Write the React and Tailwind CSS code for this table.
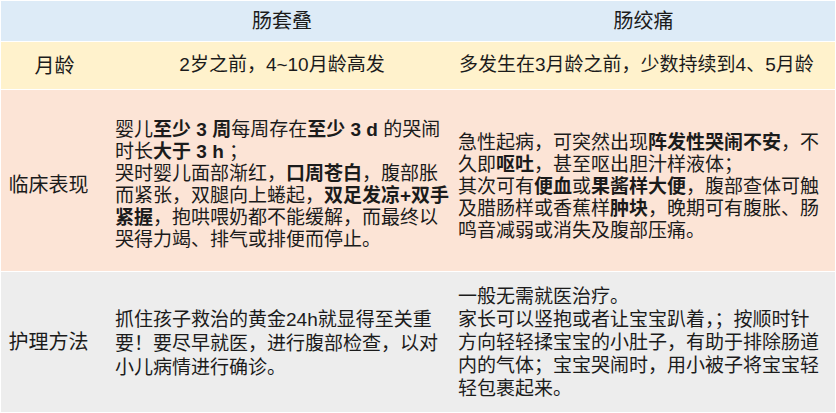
import React from 'react';

const B = ({ children }) => <span className="font-bold">{children}</span>;

const Line = ({ children }) => <div className="whitespace-nowrap">{children}</div>;

export default function App() {
  return (
    <div className="w-[836px] h-[413px] bg-white p-px flex flex-col gap-px text-[#1b1b1b] font-['Liberation_Sans','Noto_Sans_CJK_SC',sans-serif] overflow-hidden">
      {/* header */}
      <div className="flex h-[40px] bg-[#ddebf7] text-[20px]">
        <div className="w-[99px]" />
        <div className="w-[352px] pl-3 flex items-center justify-center">肠套叠</div>
        <div className="flex-1 flex items-center justify-center">肠绞痛</div>
      </div>

      {/* 月龄 */}
      <div className="flex h-[47px] bg-[#fff2cc] text-[19px]">
        <div className="w-[99px] pl-2 flex items-center justify-center text-[20px]">月龄</div>
        <div className="w-[352px] pl-3 flex items-center justify-center">2岁之前，4~10月龄高发</div>
        <div className="flex-1 pl-[7px] flex items-center">多发生在3月龄之前，少数持续到4、5月龄</div>
      </div>

      {/* 临床表现 */}
      <div className="flex h-[181px] bg-[#fce4d6] text-[19px] leading-[22px]">
        <div className="w-[99px] pr-1 flex items-center justify-center text-[20px] pt-2">临床表现</div>
        <div className="w-[352px] pl-[15px] flex flex-col justify-center pt-2">
          <Line>婴儿<B>至少 3 周</B>每周存在<B>至少 3 d </B>的哭闹</Line>
          <Line>时长<B>大于 3 h</B> ；</Line>
          <Line>哭时婴儿面部渐红，<B>口周苍白</B>，腹部胀</Line>
          <Line>而紧张，双腿向上蜷起，<B>双足发凉+双手</B></Line>
          <Line><B>紧握</B>，抱哄喂奶都不能缓解，而最终以</Line>
          <Line>哭得力竭、排气或排便而停止。</Line>
        </div>
        <div className="flex-1 pl-[6px] flex flex-col justify-center pt-3">
          <Line>急性起病，可突然出现<B>阵发性哭闹不安</B>，不</Line>
          <Line>久即<B>呕吐</B>，甚至呕出胆汁样液体；</Line>
          <Line>其次可有<B>便血</B>或<B>果酱样大便</B>，腹部查体可触</Line>
          <Line>及腊肠样或香蕉样<B>肿块</B>，晚期可有腹胀、肠</Line>
          <Line>鸣音减弱或消失及腹部压痛。</Line>
        </div>
      </div>

      {/* 护理方法 */}
      <div className="flex h-[140px] bg-[#ededed] text-[19px] leading-[24px]">
        <div className="w-[99px] pr-1 flex items-center justify-center text-[20px]">护理方法</div>
        <div className="w-[352px] pl-[15px] flex flex-col justify-center pt-1">
          <Line>抓住孩子救治的黄金24h就显得至关重</Line>
          <Line>要！要尽早就医，进行腹部检查，以对</Line>
          <Line>小儿病情进行确诊。</Line>
        </div>
        <div className="flex-1 pl-[6px] flex flex-col justify-center leading-[23px]">
          <Line>一般无需就医治疗。</Line>
          <Line>家长可以竖抱或者让宝宝趴着，；按顺时针</Line>
          <Line>方向轻轻揉宝宝的小肚子，有助于排除肠道</Line>
          <Line>内的气体；宝宝哭闹时，用小被子将宝宝轻</Line>
          <Line>轻包裹起来。</Line>
        </div>
      </div>
    </div>
  );
}
